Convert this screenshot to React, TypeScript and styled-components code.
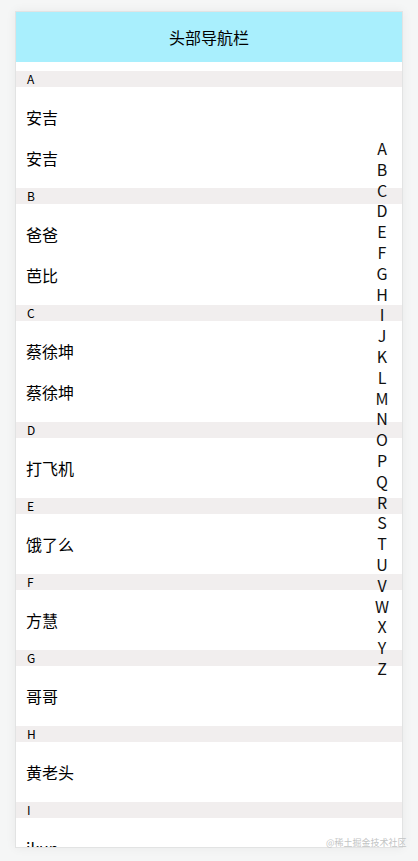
import React from "react";
import styled, { createGlobalStyle } from "styled-components";

const GlobalStyle = createGlobalStyle`
  html, body {
    margin: 0;
    padding: 0;
    background: #f5f6f6;
    font-family: "Noto Sans CJK SC", "Noto Sans", sans-serif;
    color: #000;
  }
`;

const Page = styled.div`
  padding: 11px 0 0 15px;
  height: 861px;
  box-sizing: border-box;
  position: relative;
`;

const Card = styled.div`
  position: relative;
  width: 388px;
  height: 837px;
  box-sizing: border-box;
  border: 1px solid #e2e3e3;
  background: #fff;
  overflow: hidden;
  box-shadow: 0 0 10px rgba(0, 0, 0, 0.06);
`;

const Header = styled.div`
  height: 50px;
  background: #a9effd;
  display: flex;
  align-items: center;
  justify-content: center;
  font-size: 16px;
`;

const List = styled.div`
  padding-top: 9px;
`;

const SectionHeader = styled.div`
  height: 16px;
  line-height: 16px;
  background: #f1eeee;
  padding-left: 11px;
  font-size: 12px;
`;

const Items = styled.div`
  display: flex;
  flex-direction: column;
  gap: 19px;
  padding: 19px 10px;
`;

const Item = styled.div`
  height: 22px;
  line-height: 22px;
  font-size: 16px;
`;

const IndexBar = styled.div`
  position: absolute;
  top: 126px;
  right: 0;
  width: 40px;
  display: flex;
  flex-direction: column;
  align-items: center;
`;

const IndexLetter = styled.div`
  font-size: 16px;
  line-height: 20.8px;
  color: #111;
`;

const Watermark = styled.div`
  position: absolute;
  left: 326px;
  top: 837px;
  font-size: 9px;
  line-height: 12px;
  color: #c2c4c4;
  white-space: nowrap;
`;

const sections: { letter: string; names: string[] }[] = [
  { letter: "A", names: ["安吉", "安吉"] },
  { letter: "B", names: ["爸爸", "芭比"] },
  { letter: "C", names: ["蔡徐坤", "蔡徐坤"] },
  { letter: "D", names: ["打飞机"] },
  { letter: "E", names: ["饿了么"] },
  { letter: "F", names: ["方慧"] },
  { letter: "G", names: ["哥哥"] },
  { letter: "H", names: ["黄老头"] },
  { letter: "I", names: ["ikun"] },
];

const letters = "ABCDEFGHIJKLMNOPQRSTUVWXYZ".split("");

export default function App() {
  return (
    <>
      <GlobalStyle />
      <Page>
        <Card>
          <Header>头部导航栏</Header>
          <List>
            {sections.map((s) => (
              <div key={s.letter}>
                <SectionHeader>{s.letter}</SectionHeader>
                <Items>
                  {s.names.map((n, i) => (
                    <Item key={i}>{n}</Item>
                  ))}
                </Items>
              </div>
            ))}
          </List>
          <IndexBar>
            {letters.map((l) => (
              <IndexLetter key={l}>{l}</IndexLetter>
            ))}
          </IndexBar>
        </Card>
        <Watermark>@稀土掘金技术社区</Watermark>
      </Page>
    </>
  );
}
